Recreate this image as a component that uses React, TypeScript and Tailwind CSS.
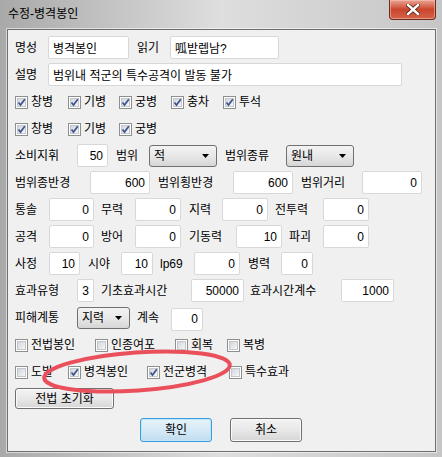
import clsx from "clsx";

const font = "font-['Liberation_Sans','Noto_Sans_CJK_KR',sans-serif]";

function Field({ className, value, left }: { className: string; value: string; left?: boolean }) {
  return (
    <input
      readOnly
      value={value}
      className={clsx(
        "h-[23px] rounded-[2px] border border-[#d8d8d8] bg-white px-[4px] text-[12px] text-black outline-none",
        left ? "text-left" : "text-right",
        className
      )}
    />
  );
}

function Label({ className, children }: { className: string; children: React.ReactNode }) {
  return <span className={clsx("shrink-0 text-[12px] text-black leading-none", className)}>{children}</span>;
}

function Combo({ className, value }: { className: string; value: string }) {
  return (
    <div
      className={clsx(
        "flex h-[22px] items-center justify-between rounded-[3px] border border-[#707070] bg-gradient-to-b from-[#f3f3f3] via-[#e8e8e8] to-[#d6d6d6] pl-[4px] pr-[7px] text-[12px] text-black",
        className
      )}
    >
      <span>{value}</span>
      <svg width="7" height="4" viewBox="0 0 7 4">
        <path d="M0 0h7L3.5 4z" fill="#000" />
      </svg>
    </div>
  );
}

function Check({ label, checked, className }: { label: string; checked?: boolean; className: string }) {
  return (
    <div className={clsx("flex shrink-0 items-center", className)}>
      <span className="flex h-[13px] w-[13px] items-center justify-center border border-[#8e8f8f] bg-white">
        <span className="relative flex h-[9px] w-[9px] items-center justify-center border border-[#c4c7cc] bg-gradient-to-br from-[#d2d5da] to-[#f7f7f7]">
          {checked && (
            <svg width="9" height="9" viewBox="0 0 9 9" className="absolute -left-[1px] -top-[1px]">
              <path d="M1.5 4.5l2 2.6L7.8 1.2" stroke="#3d5493" strokeWidth="1.7" fill="none" />
            </svg>
          )}
        </span>
      </span>
      <span className="ml-[3px] text-[12px] leading-none text-black">{label}</span>
    </div>
  );
}

function Button({ className, children, primary }: { className: string; children: React.ReactNode; primary?: boolean }) {
  return (
    <button
      className={clsx(
        "flex items-center justify-center rounded-[3px] border text-[12px] text-black",
        primary
          ? "border-[#3c9ed8] bg-gradient-to-b from-[#e6f3fb] via-[#d6eaf7] to-[#bfdcef] shadow-[inset_0_0_0_1px_#bfe6fa]"
          : "border-[#707070] bg-gradient-to-b from-[#f3f3f3] via-[#e8e8e8] to-[#d6d6d6] shadow-[inset_0_0_0_1px_#fbfbfb]",
        className
      )}
    >
      {children}
    </button>
  );
}

export default function App() {
  return (
    <div
      className={clsx(
        "relative flex h-[457px] w-[442px] flex-col bg-gradient-to-r from-[#a9a9a9] via-[#dedede] to-[#c6c6c6]",
        font
      )}
    >
      {/* title bar */}
      <div className="flex h-[29px] shrink-0 items-start justify-between">
        <span className="ml-[8px] mt-[8px] text-[12px] leading-none text-black">수정-병격봉인</span>
        <div className="mr-[6px] flex h-[20px] w-[47px] items-center justify-center rounded-b-[4px] border border-t-0 border-[#6d2a1f] bg-gradient-to-b from-[#e9a493] via-[#c9452c] to-[#d5644a] shadow-[inset_0_0_0_1px_rgba(255,200,190,0.5)]">
          <svg width="14" height="11" viewBox="0 0 14 11">
            <path d="M2 1l10 9M12 1L2 10" stroke="#5b2418" strokeWidth="4" strokeLinecap="square" />
            <path d="M2 1l10 9M12 1L2 10" stroke="#fff" strokeWidth="2.4" strokeLinecap="square" />
          </svg>
        </div>
      </div>

      {/* client area */}
      <div className="ml-[7px] mr-[6px] h-[423px] border border-[#6e6e6e] bg-[#f0f0f0] pl-[7px] shadow-[0_0_0_1px_rgba(255,255,255,0.55)]">
        <div className="mt-[6px] flex h-[23px] items-center">
          <Label className="w-[33px]">명성</Label>
          <Field className="w-[81px]" value="병격봉인" left />
          <Label className="ml-[8px] w-[33px]">읽기</Label>
          <Field className="w-[109px]" value="呱받렙남?" left />
        </div>
        <div className="mt-[4px] flex h-[23px] items-center">
          <Label className="w-[33px]">설명</Label>
          <Field className="w-[354px]" value="범위내 적군의 특수공격이 발동 불가" left />
        </div>

        <div className="mt-[7px] flex h-[18px] items-center">
          <Check className="w-[53px]" label="창병" checked />
          <Check className="w-[51px]" label="기병" checked />
          <Check className="w-[52px]" label="궁병" checked />
          <Check className="w-[52px]" label="충차" checked />
          <Check className="w-[52px]" label="투석" checked />
        </div>
        <div className="mt-[9px] flex h-[18px] items-center">
          <Check className="w-[53px]" label="창병" checked />
          <Check className="w-[51px]" label="기병" checked />
          <Check className="w-[52px]" label="궁병" checked />
        </div>

        <div className="mt-[6px] flex h-[23px] items-center">
          <Label className="w-[62px]">소비지휘</Label>
          <Field className="w-[31px]" value="50" />
          <Label className="ml-[8px] w-[33px]">범위</Label>
          <Combo className="w-[68px]" value="적" />
          <Label className="ml-[8px] w-[61px]">범위종류</Label>
          <Combo className="w-[68px]" value="원내" />
        </div>
        <div className="mt-[4px] flex h-[23px] items-center">
          <Label className="w-[75px]">범위종반경</Label>
          <Field className="w-[60px]" value="600" />
          <Label className="ml-[8px] w-[75px]">범위횡반경</Label>
          <Field className="w-[60px]" value="600" />
          <Label className="ml-[8px] w-[61px]">범위거리</Label>
          <Field className="w-[60px]" value="0" />
        </div>
        <div className="mt-[4px] flex h-[23px] items-center">
          <Label className="w-[34px]">통솔</Label>
          <Field className="w-[45px]" value="0" />
          <Label className="ml-[7px] w-[34px]">무력</Label>
          <Field className="w-[46px]" value="0" />
          <Label className="ml-[8px] w-[33px]">지력</Label>
          <Field className="w-[46px]" value="0" />
          <Label className="ml-[7px] w-[48px]">전투력</Label>
          <Field className="w-[46px]" value="0" />
        </div>
        <div className="mt-[4px] flex h-[23px] items-center">
          <Label className="w-[34px]">공격</Label>
          <Field className="w-[45px]" value="0" />
          <Label className="ml-[7px] w-[34px]">방어</Label>
          <Field className="w-[46px]" value="0" />
          <Label className="ml-[8px] w-[47px]">기동력</Label>
          <Field className="w-[46px]" value="10" />
          <Label className="ml-[7px] w-[34px]">파괴</Label>
          <Field className="w-[46px]" value="0" />
        </div>
        <div className="mt-[4px] flex h-[23px] items-center">
          <Label className="w-[34px]">사정</Label>
          <Field className="w-[31px]" value="10" />
          <Label className="ml-[8px] w-[33px]">시야</Label>
          <Field className="w-[32px]" value="10" />
          <Label className="ml-[7px] w-[34px]">lp69</Label>
          <Field className="w-[46px]" value="0" />
          <Label className="ml-[8px] w-[33px]">병력</Label>
          <Field className="w-[32px]" value="0" />
        </div>
        <div className="mt-[4px] flex h-[23px] items-center">
          <Label className="w-[62px]">효과유형</Label>
          <Field className="w-[17px] px-[3px]" value="3" />
          <Label className="ml-[7px] w-[90px]">기초효과시간</Label>
          <Field className="w-[53px]" value="50000" />
          <Label className="ml-[6px] w-[91px]">효과시간계수</Label>
          <Field className="w-[53px]" value="1000" />
        </div>
        <div className="mt-[4px] flex h-[24px] items-center">
          <Label className="w-[62px]">피해계통</Label>
          <Combo className="w-[53px]" value="지력" />
          <Label className="ml-[7px] w-[34px]">계속</Label>
          <Field className="mt-[2px] w-[32px]" value="0" />
        </div>

        <div className="mt-[6px] flex h-[18px] items-center">
          <Check className="w-[80px]" label="전법봉인" />
          <Check className="w-[80px]" label="인종여포" />
          <Check className="w-[52px]" label="회복" />
          <Check className="w-[60px]" label="복병" />
        </div>
        <div className="mt-[9px] flex h-[18px] items-center">
          <Check className="w-[53px]" label="도발" />
          <Check className="w-[79px]" label="병격봉인" checked />
          <Check className="w-[82px]" label="전군병격" checked />
          <Check className="w-[70px]" label="특수효과" />
        </div>

        <Button className="mt-[7px] h-[21px] w-[99px]">전법 초기화</Button>

        <div className="mt-[9px] flex">
          <Button className="ml-[125px] h-[24px] w-[72px]" primary>
            확인
          </Button>
          <Button className="ml-[18px] h-[24px] w-[72px]">취소</Button>
        </div>
      </div>

      <div className="h-[5px]" />

      {/* red hand-drawn annotation */}
      <svg
        className="pointer-events-none absolute left-[36px] top-[344px]"
        width="206"
        height="56"
        viewBox="0 0 206 56"
      >
        <ellipse
          cx="101"
          cy="27.5"
          rx="93"
          ry="19"
          transform="rotate(-4 101 27.5)"
          fill="none"
          stroke="#ea4f5c"
          strokeWidth="4"
        />
      </svg>
    </div>
  );
}
